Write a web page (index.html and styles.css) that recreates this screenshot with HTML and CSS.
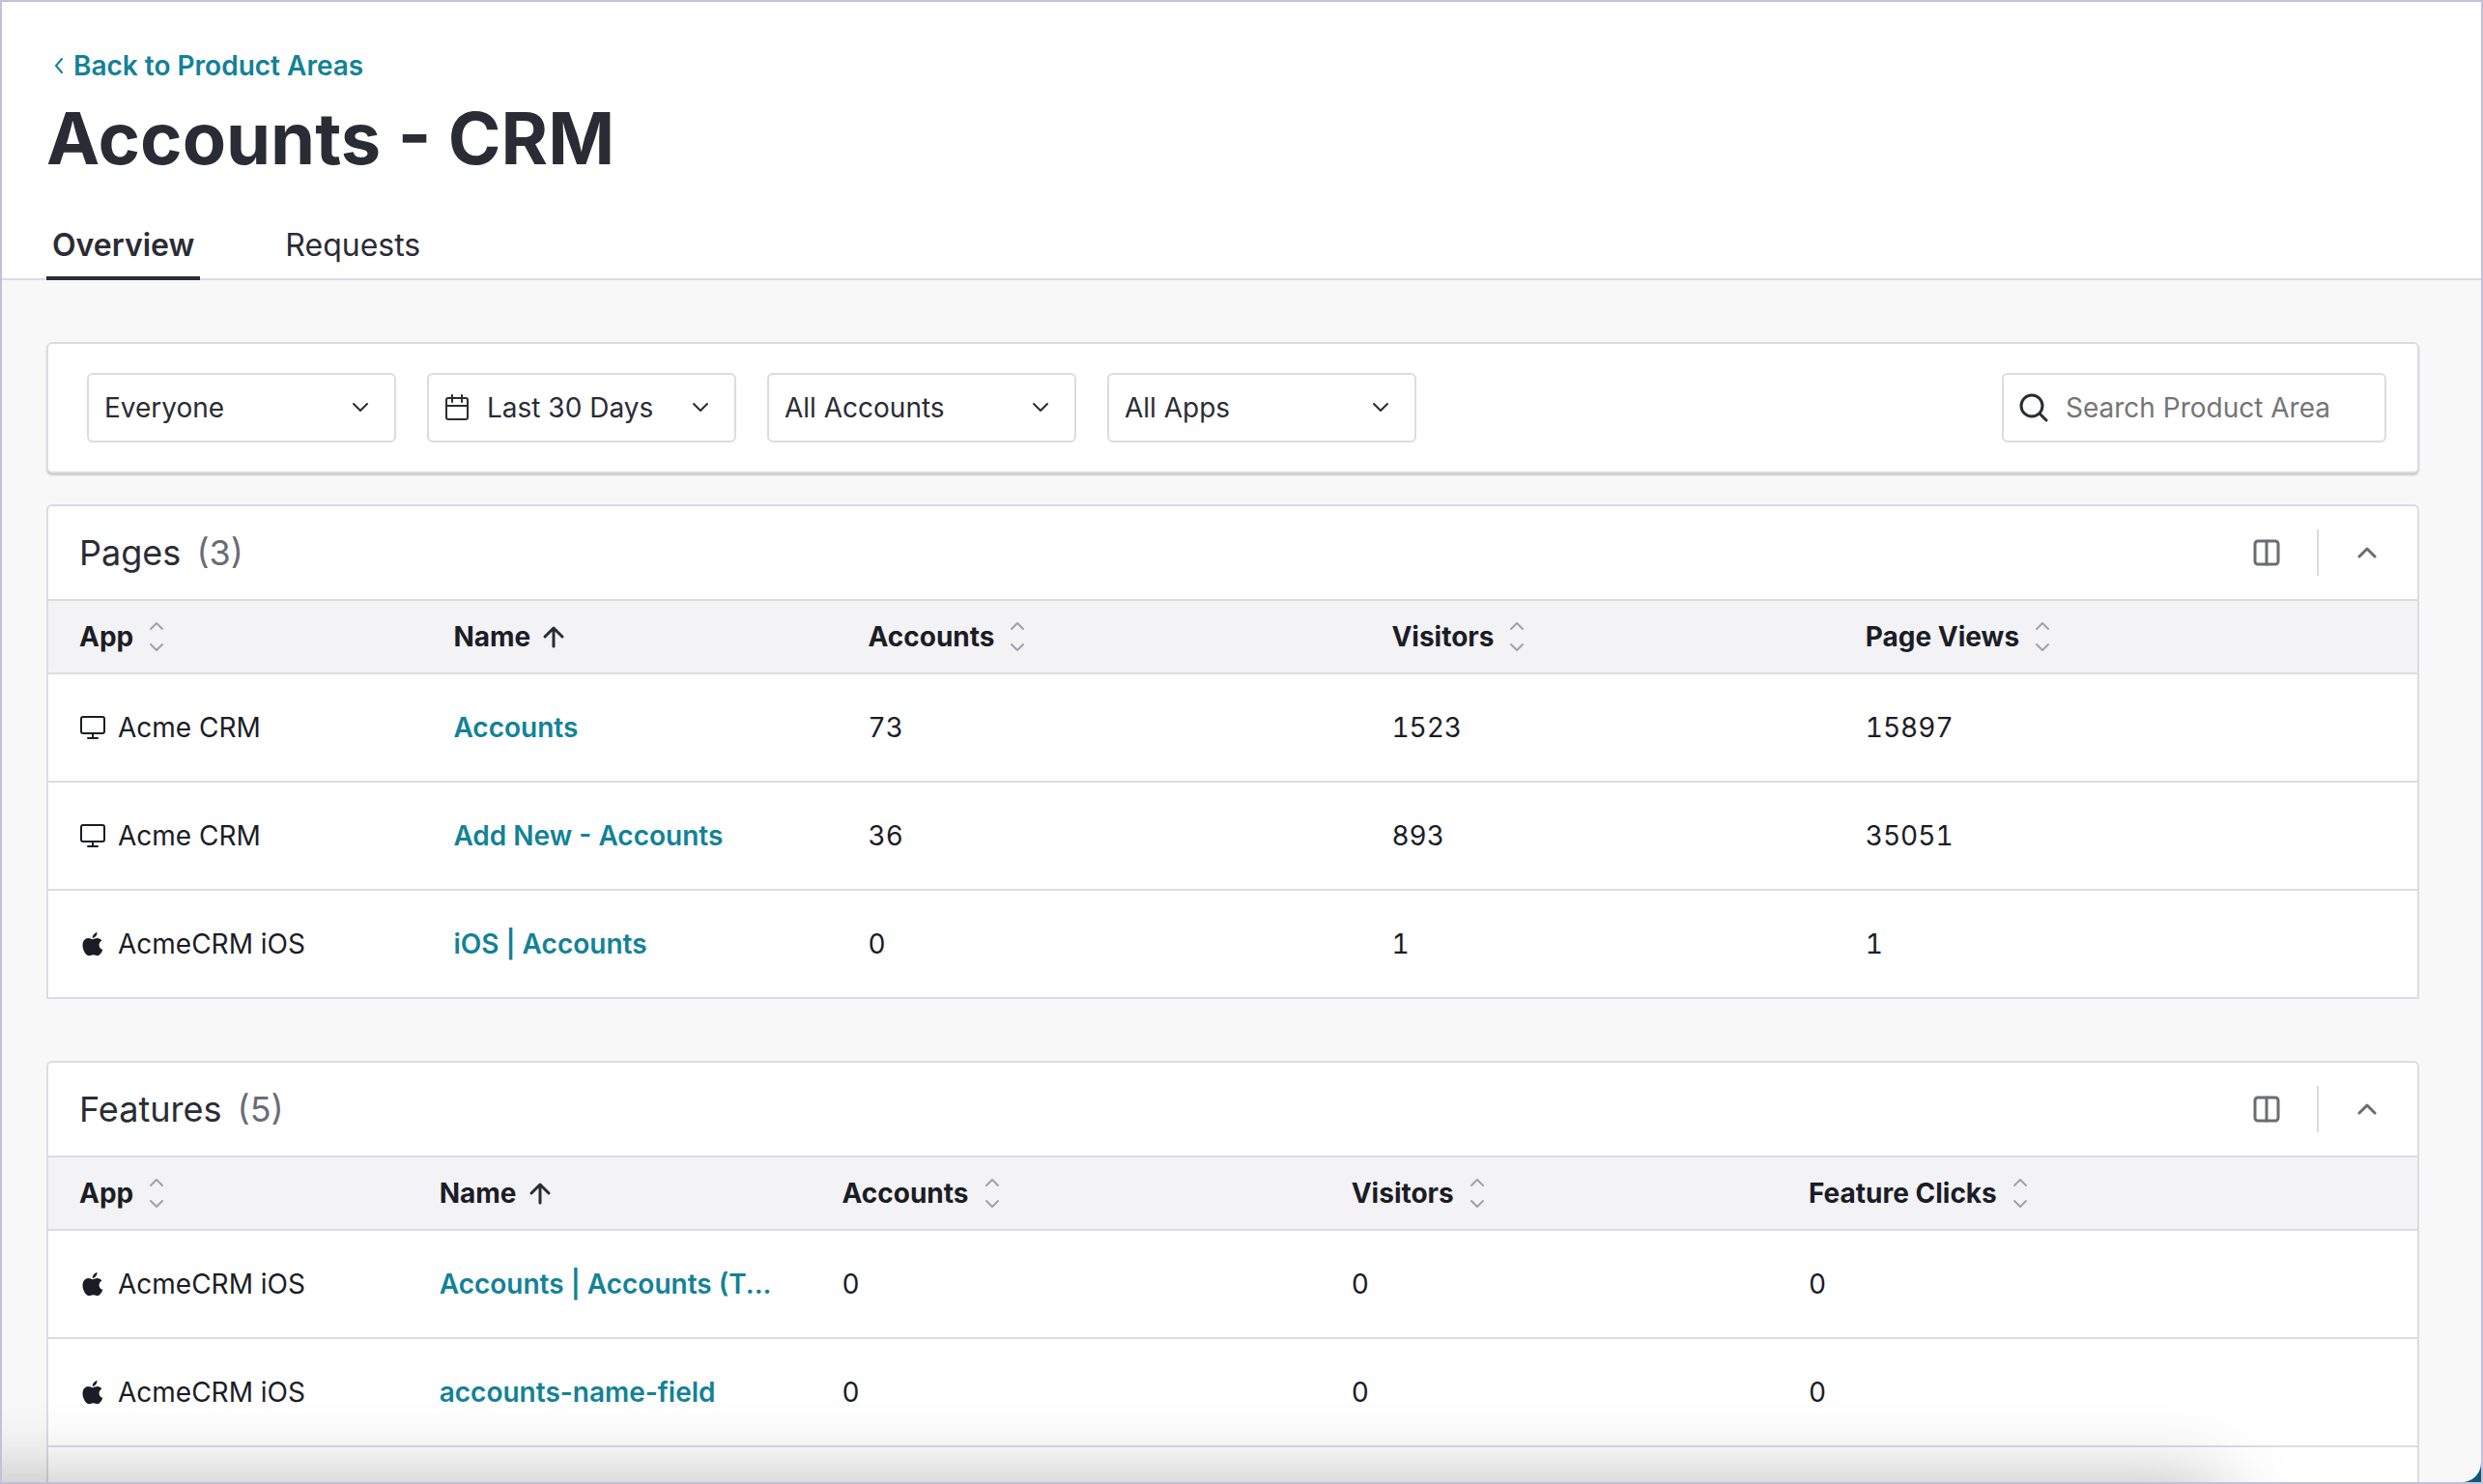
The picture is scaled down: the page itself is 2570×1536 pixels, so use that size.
FILE: index.html
```html
<!DOCTYPE html>
<html lang="en">
<head>
    <meta charset="UTF-8">
    <title>Accounts - CRM</title>
    <link rel="stylesheet" href="styles.css">
</head>
<body>
    <!-- Shared icons -->
    <svg class="icon-defs" width="0" height="0">
        <symbol id="chevron-down" viewBox="0 0 18 12"><path d="M2 2l7 7 7-7"/></symbol>
        <symbol id="chevron-up" viewBox="0 0 20 14"><path d="M2 11l8-8 8 8"/></symbol>
        <symbol id="sort" viewBox="0 0 16 34"><path d="M2 9l6-6 6 6M2 25l6 6 6-6"/></symbol>
        <symbol id="arrow-up" viewBox="0 0 24 24"><path d="M12 22V3M3 12L12 3l9 9"/></symbol>
        <symbol id="columns" viewBox="0 0 28 28"><rect x="2" y="2" width="24" height="24" rx="3"/><path d="M14 2v24"/></symbol>
        <symbol id="monitor" viewBox="0 0 28 28"><rect x="2" y="3" width="24" height="17" rx="2"/><path d="M14 20v5M9 25h10"/></symbol>
        <symbol id="apple" viewBox="0 0 24 28"><path d="M16.500 2c.2 2.900-1.800 5.500-4.700 5.900C11.500 5.300 13.800 2.600 16.500 2zM12 9.200c1.300 0 2.600-1.200 4.700-1.200 2 0 3.700 1 4.700 2.500-4.200 2.500-3.500 7.900.9 9.600-1 2.800-3.100 6.100-5.300 6.100-1.600 0-2.200-1-4.400-1-2.100 0-2.800 1-4.300 1C5 26.200 1.500 20.400 1.500 15.400 1.500 10.900 4.300 8 7.300 8c2 0 3.500 1.200 4.700 1.200z"/></symbol>
    </svg>

    <div class="window">
        <div class="app">
            <header class="header">
                <a class="back" href="#"><svg class="icon" width="10" height="16" viewBox="0 0 10 16"><path d="M8 1L2 8l6 7"/></svg>Back to Product Areas</a>
                <h1>Accounts - CRM</h1>
                <nav class="tabs">
                    <a class="tab active" href="#">Overview</a>
                    <a class="tab" href="#">Requests</a>
                </nav>
            </header>

            <main class="content">
                <div class="filters">
                    <div class="field">
                        <select aria-label="Segment"><option>Everyone</option></select>
                        <svg class="icon chevron" width="18" height="12"><use href="#chevron-down"/></svg>
                    </div>
                    <div class="field">
                        <svg class="icon calendar" width="26" height="28" viewBox="0 0 26 28"><rect x="2" y="4" width="22" height="22" rx="2"/><path d="M2 12h22M8 1v7M18 1v7"/></svg>
                        <select aria-label="Date range"><option>Last 30 Days</option></select>
                        <svg class="icon chevron" width="18" height="12"><use href="#chevron-down"/></svg>
                    </div>
                    <div class="field">
                        <select aria-label="Accounts"><option>All Accounts</option></select>
                        <svg class="icon chevron" width="18" height="12"><use href="#chevron-down"/></svg>
                    </div>
                    <div class="field">
                        <select aria-label="Apps"><option>All Apps</option></select>
                        <svg class="icon chevron" width="18" height="12"><use href="#chevron-down"/></svg>
                    </div>
                    <div class="field search">
                        <svg class="icon" width="30" height="30" viewBox="0 0 30 30"><circle cx="13" cy="13" r="11"/><path d="M21 21l7 7"/></svg>
                        <input type="search" placeholder="Search Product Area" aria-label="Search Product Area">
                    </div>
                </div>

                <section class="card">
                    <div class="card-header">
                        <h2>Pages <span class="count">(3)</span></h2>
                        <button class="icon-btn" aria-label="Columns"><svg class="icon" width="28" height="28"><use href="#columns"/></svg></button>
                        <span class="divider"></span>
                        <button class="icon-btn" aria-label="Collapse"><svg class="icon" width="20" height="14"><use href="#chevron-up"/></svg></button>
                    </div>
                    <table class="pages">
                        <thead>
                            <tr>
                                <th><button class="sort">App <svg class="icon" width="16" height="34"><use href="#sort"/></svg></button></th>
                                <th><button class="sort sorted">Name <svg class="icon" width="24" height="24"><use href="#arrow-up"/></svg></button></th>
                                <th><button class="sort">Accounts <svg class="icon" width="16" height="34"><use href="#sort"/></svg></button></th>
                                <th><button class="sort">Visitors <svg class="icon" width="16" height="34"><use href="#sort"/></svg></button></th>
                                <th><button class="sort">Page Views <svg class="icon" width="16" height="34"><use href="#sort"/></svg></button></th>
                            </tr>
                        </thead>
                        <tbody>
                            <tr>
                                <td><div class="app-name"><svg class="icon" width="28" height="28"><use href="#monitor"/></svg>Acme CRM</div></td>
                                <td><a href="#">Accounts</a></td>
                                <td class="num">73</td>
                                <td class="num">1523</td>
                                <td class="num">15897</td>
                            </tr>
                            <tr>
                                <td><div class="app-name"><svg class="icon" width="28" height="28"><use href="#monitor"/></svg>Acme CRM</div></td>
                                <td><a href="#">Add New - Accounts</a></td>
                                <td class="num">36</td>
                                <td class="num">893</td>
                                <td class="num">35051</td>
                            </tr>
                            <tr>
                                <td><div class="app-name"><svg class="apple" width="28" height="28"><use href="#apple"/></svg>AcmeCRM iOS</div></td>
                                <td><a href="#">iOS | Accounts</a></td>
                                <td class="num">0</td>
                                <td class="num">1</td>
                                <td class="num">1</td>
                            </tr>
                        </tbody>
                    </table>
                </section>

                <section class="card">
                    <div class="card-header">
                        <h2>Features <span class="count">(5)</span></h2>
                        <button class="icon-btn" aria-label="Columns"><svg class="icon" width="28" height="28"><use href="#columns"/></svg></button>
                        <span class="divider"></span>
                        <button class="icon-btn" aria-label="Collapse"><svg class="icon" width="20" height="14"><use href="#chevron-up"/></svg></button>
                    </div>
                    <table class="features">
                        <thead>
                            <tr>
                                <th><button class="sort">App <svg class="icon" width="16" height="34"><use href="#sort"/></svg></button></th>
                                <th><button class="sort sorted">Name <svg class="icon" width="24" height="24"><use href="#arrow-up"/></svg></button></th>
                                <th><button class="sort">Accounts <svg class="icon" width="16" height="34"><use href="#sort"/></svg></button></th>
                                <th><button class="sort">Visitors <svg class="icon" width="16" height="34"><use href="#sort"/></svg></button></th>
                                <th><button class="sort">Feature Clicks <svg class="icon" width="16" height="34"><use href="#sort"/></svg></button></th>
                            </tr>
                        </thead>
                        <tbody>
                            <tr>
                                <td><div class="app-name"><svg class="apple" width="28" height="28"><use href="#apple"/></svg>AcmeCRM iOS</div></td>
                                <td><a href="#">Accounts | Accounts (T...</a></td>
                                <td class="num">0</td>
                                <td class="num">0</td>
                                <td class="num">0</td>
                            </tr>
                            <tr>
                                <td><div class="app-name"><svg class="apple" width="28" height="28"><use href="#apple"/></svg>AcmeCRM iOS</div></td>
                                <td><a href="#">accounts-name-field</a></td>
                                <td class="num">0</td>
                                <td class="num">0</td>
                                <td class="num">0</td>
                            </tr>
                            <tr>
                                <td></td>
                                <td></td>
                                <td></td>
                                <td></td>
                                <td></td>
                            </tr>
                        </tbody>
                    </table>
                </section>
            </main>
            <div class="bottom-shadow"></div>
        </div>
    </div>
</body>
</html>
```
FILE: styles.css
```css
* {
    box-sizing: border-box;
}
body {
    margin: 0;
    font-family: Inter, "Liberation Sans", sans-serif;
    font-size: 28px;
    font-optical-sizing: none;
    line-height: 40px;
    color: #2a2c35;
}
a {
    color: #128297;
    font-weight: 600;
    text-decoration: none;
}
button, input, select {
    font: inherit;
    color: inherit;
    background: none;
    border: none;
    padding: 0;
    margin: 0;
}
button {
    cursor: pointer;
}
.icon-defs {
    position: absolute;
}
.icon {
    flex: none;
    fill: none;
    stroke: currentColor;
    stroke-width: 2;
    stroke-linecap: round;
    stroke-linejoin: round;
}
.window {
    height: 100vh;
    border: 2px solid #c5c0da;
    background: #0b5a7a;
}
.app {
    position: relative;
    height: 100%;
    overflow: hidden;
    background: #f8f8f8;
    border-bottom-right-radius: 20px;
}

/* Header */
.header {
    padding: 46px 46px 0;
    background: #fff;
    border-bottom: 2px solid #dadce5;
}
.back {
    display: flex;
    align-items: center;
    gap: 10px;
    padding-left: 8px;
}
h1 {
    margin: 11px 0 0;
    font-size: 74px;
    font-weight: 700;
    line-height: 88px;
}
.tabs {
    display: flex;
    gap: 82px;
    margin: 47px 0 -2px;
}
.tab {
    padding: 0 6px 12px;
    border-bottom: 4px solid transparent;
    color: #2a2c35;
    font-size: 32px;
    font-weight: 400;
}
.tab.active {
    font-weight: 600;
    border-color: #2a2c35;
}

/* Filters */
.content {
    padding: 64px 64px 0 46px;
}
.filters {
    display: flex;
    gap: 32px;
    padding: 30px 32px 30px 40px;
    background: #fff;
    border: 2px solid #dadce5;
    border-radius: 6px;
    box-shadow: 0 2px 2px rgba(0, 0, 0, 0.2);
}
.field {
    display: flex;
    align-items: center;
    width: 320px;
    height: 72px;
    padding: 0 26px 0 16px;
    background: #fff;
    border: 2px solid #dadce5;
    border-radius: 6px;
}
.field select {
    flex: 1;
    min-width: 0;
    height: 40px;
    appearance: none;
}
.field .chevron {
    pointer-events: none;
}
.calendar {
    margin-right: 18px;
}
.search {
    width: 398px;
    margin-left: auto;
    padding: 0 16px;
    gap: 18px;
}
.search input {
    flex: 1;
    min-width: 0;
    height: 40px;
}
.search input::placeholder {
    color: #757575;
}
.search .icon {
    stroke-width: 3;
}

/* Cards */
.card {
    margin-top: 32px;
    background: #fff;
    border: 2px solid #dadce5;
    border-bottom: none;
    border-radius: 6px 6px 0 0;
}
.card + .card {
    margin-top: 64px;
}
.card-header {
    display: flex;
    align-items: center;
    height: 98px;
    padding: 0 42px 0 32px;
    border-bottom: 2px solid #dadce5;
    color: #6a6c75;
}
h2 {
    flex: 1;
    margin: 0;
    color: #2a2c35;
    font-size: 36px;
    font-weight: 400;
}
.count {
    margin-left: 6px;
    color: #6a6c75;
}
.icon-btn {
    display: flex;
}
.icon-btn .icon {
    stroke-width: 3;
}
.divider {
    width: 2px;
    height: 48px;
    margin: 0 40px 0 38px;
    background: #dadce5;
}

/* Tables */
table {
    width: 100%;
    table-layout: fixed;
    border-collapse: separate;
    border-spacing: 0;
    color: #1b1d26;
}
th, td {
    padding: 0 0 0 32px;
    border-bottom: 2px solid #dadce5;
    text-align: left;
    white-space: nowrap;
}
th {
    height: 76px;
    background: #f3f3f6;
}
td {
    height: 112px;
}
.num {
    font-variant-numeric: tabular-nums;
}
.sort {
    display: flex;
    align-items: center;
    gap: 16px;
    font-weight: 700;
}
.sort .icon {
    color: #a0a1ab;
}
.sort.sorted {
    gap: 12px;
}
.sort.sorted .icon {
    color: #2a2c35;
    stroke-width: 3;
}
.app-name {
    display: flex;
    align-items: center;
    gap: 12px;
}
.apple {
    flex: none;
    fill: #1b1d26;
}
.pages th:nth-child(1) { width: 15.8%; }
.pages th:nth-child(2) { width: 17.5%; }
.pages th:nth-child(3) { width: 22.1%; }
.pages th:nth-child(4) { width: 20%; }
.features th:nth-child(1) { width: 15.2%; }
.features th:nth-child(2) { width: 17%; }
.features th:nth-child(3) { width: 21.5%; }
.features th:nth-child(4) { width: 19.3%; }

/* Soft shadow rising from the bottom edge */
.bottom-shadow {
    position: absolute;
    top: 100%;
    left: -100px;
    right: 270px;
    height: 200px;
    box-shadow: 0 0 80px rgba(0, 0, 0, 0.28);
    pointer-events: none;
}
```
